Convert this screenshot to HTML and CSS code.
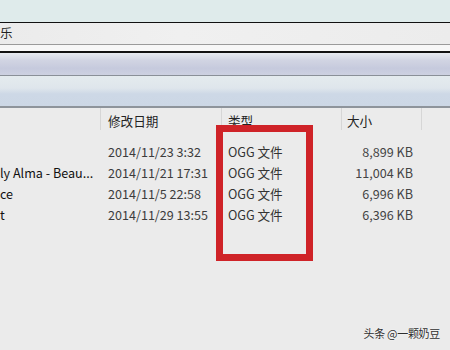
FILE: index.html
```html
<!DOCTYPE html>
<html>
<head>
<meta charset="utf-8">
<link rel="stylesheet" href="styles.css">
</head>
<body>
<div class="window">
  <div class="titlebar"></div>
  <div class="address"><span class="crumb">乐</span></div>
  <div class="strip"></div>
  <div class="toolbar"></div>
  <div class="navbar"></div>
  <div class="list">
    <div class="header">
      <div class="cell c-name"></div>
      <div class="cell c-date">修改日期</div>
      <div class="cell c-type">类型</div>
      <div class="cell c-size">大小</div>
      <div class="cell c-rest"></div>
    </div>
    <div class="rows">
      <div class="row">
        <div class="cell c-name"></div>
        <div class="cell c-date">2014/11/23 3:32</div>
        <div class="cell c-type">OGG 文件</div>
        <div class="cell c-size">8,899 KB</div>
      </div>
      <div class="row">
        <div class="cell c-name">ly Alma - Beau...</div>
        <div class="cell c-date">2014/11/21 17:31</div>
        <div class="cell c-type">OGG 文件</div>
        <div class="cell c-size">11,004 KB</div>
      </div>
      <div class="row">
        <div class="cell c-name">ce</div>
        <div class="cell c-date">2014/11/5 22:58</div>
        <div class="cell c-type">OGG 文件</div>
        <div class="cell c-size">6,996 KB</div>
      </div>
      <div class="row">
        <div class="cell c-name">t</div>
        <div class="cell c-date">2014/11/29 13:55</div>
        <div class="cell c-type">OGG 文件</div>
        <div class="cell c-size">6,396 KB</div>
      </div>
    </div>
    <div class="highlight"></div>
    <div class="watermark">头条 @一颗奶豆</div>
  </div>
</div>
</body>
</html>
```

FILE: styles.css
```css
html, body {
  margin: 0;
  padding: 0;
}
body {
  width: 450px;
  height: 350px;
  overflow: hidden;
  background: #ebebeb;
  font-family: "Noto Sans CJK SC", "Noto Sans", sans-serif;
  font-size: 12.6px;
  color: #2a2a2a;
}
.window {
  display: flex;
  flex-direction: column;
  height: 350px;
}
.titlebar {
  height: 22px;
  background: #dfebeb;
  border-bottom: 1px solid #111;
}
.address {
  height: 21px;
  background: linear-gradient(to right, #ebebeb 0%, #f0f0f0 40%, #ececec 100%);
  border-bottom: 1px solid #9a9a9a;
  display: flex;
  align-items: center;
}
.crumb {
  margin-left: 0;
  font-size: 12.5px;
  color: #222;
  line-height: 1;
}
.strip {
  height: 6px;
  background: #f7f7f7;
  border-bottom: 2px solid #111;
}
.toolbar {
  height: 22px;
  background: linear-gradient(to bottom, #e6e9ef 0%, #d2d5e3 30%, #c6cadd 70%, #cdd1e1 100%);
  border-bottom: 1px solid #8a9098;
}
.navbar {
  height: 30px;
  background: linear-gradient(to bottom, #e4ebee 0%, #dfe6ec 40%, #cdd8e6 60%, #ccd7e5 100%);
  border-bottom: 2px solid #8e949b;
}
.list {
  position: relative;
  flex: 1;
  background: #ebebeb;
}
.header {
  display: flex;
  height: 22px;
}
.header .cell {
  border-right: 1px solid #d6d6d6;
  display: flex;
  align-items: center;
  padding-top: 3px;
  box-sizing: border-box;
  color: #222;
}
.cell {
  box-sizing: border-box;
  white-space: nowrap;
  overflow: hidden;
}
.c-name { width: 101px; }
.c-date { width: 121px; padding-left: 7px; color: #3c3c3c; }
.c-type { width: 120px; padding-left: 6px; }
.c-size { width: 80px; padding-left: 5px; }
.c-rest { flex: 1; border-right: none !important; }
.rows {
  padding-top: 11px;
}
.row {
  display: flex;
  height: 21px;
  align-items: center;
}
.row .c-name { color: #111; }
.row .c-type { color: #333; }
.row .c-size {
  text-align: right;
  padding-right: 9px;
  color: #444;
}
.highlight {
  position: absolute;
  left: 216px;
  top: 17px;
  width: 97px;
  height: 136px;
  box-sizing: border-box;
  border: 7px solid #cf2328;
}
.watermark {
  position: absolute;
  right: 10px;
  bottom: 9px;
  font-size: 11px;
  letter-spacing: -0.3px;
  color: #2e2e2e;
  text-shadow: 0 0 2px #fff;
}
```
